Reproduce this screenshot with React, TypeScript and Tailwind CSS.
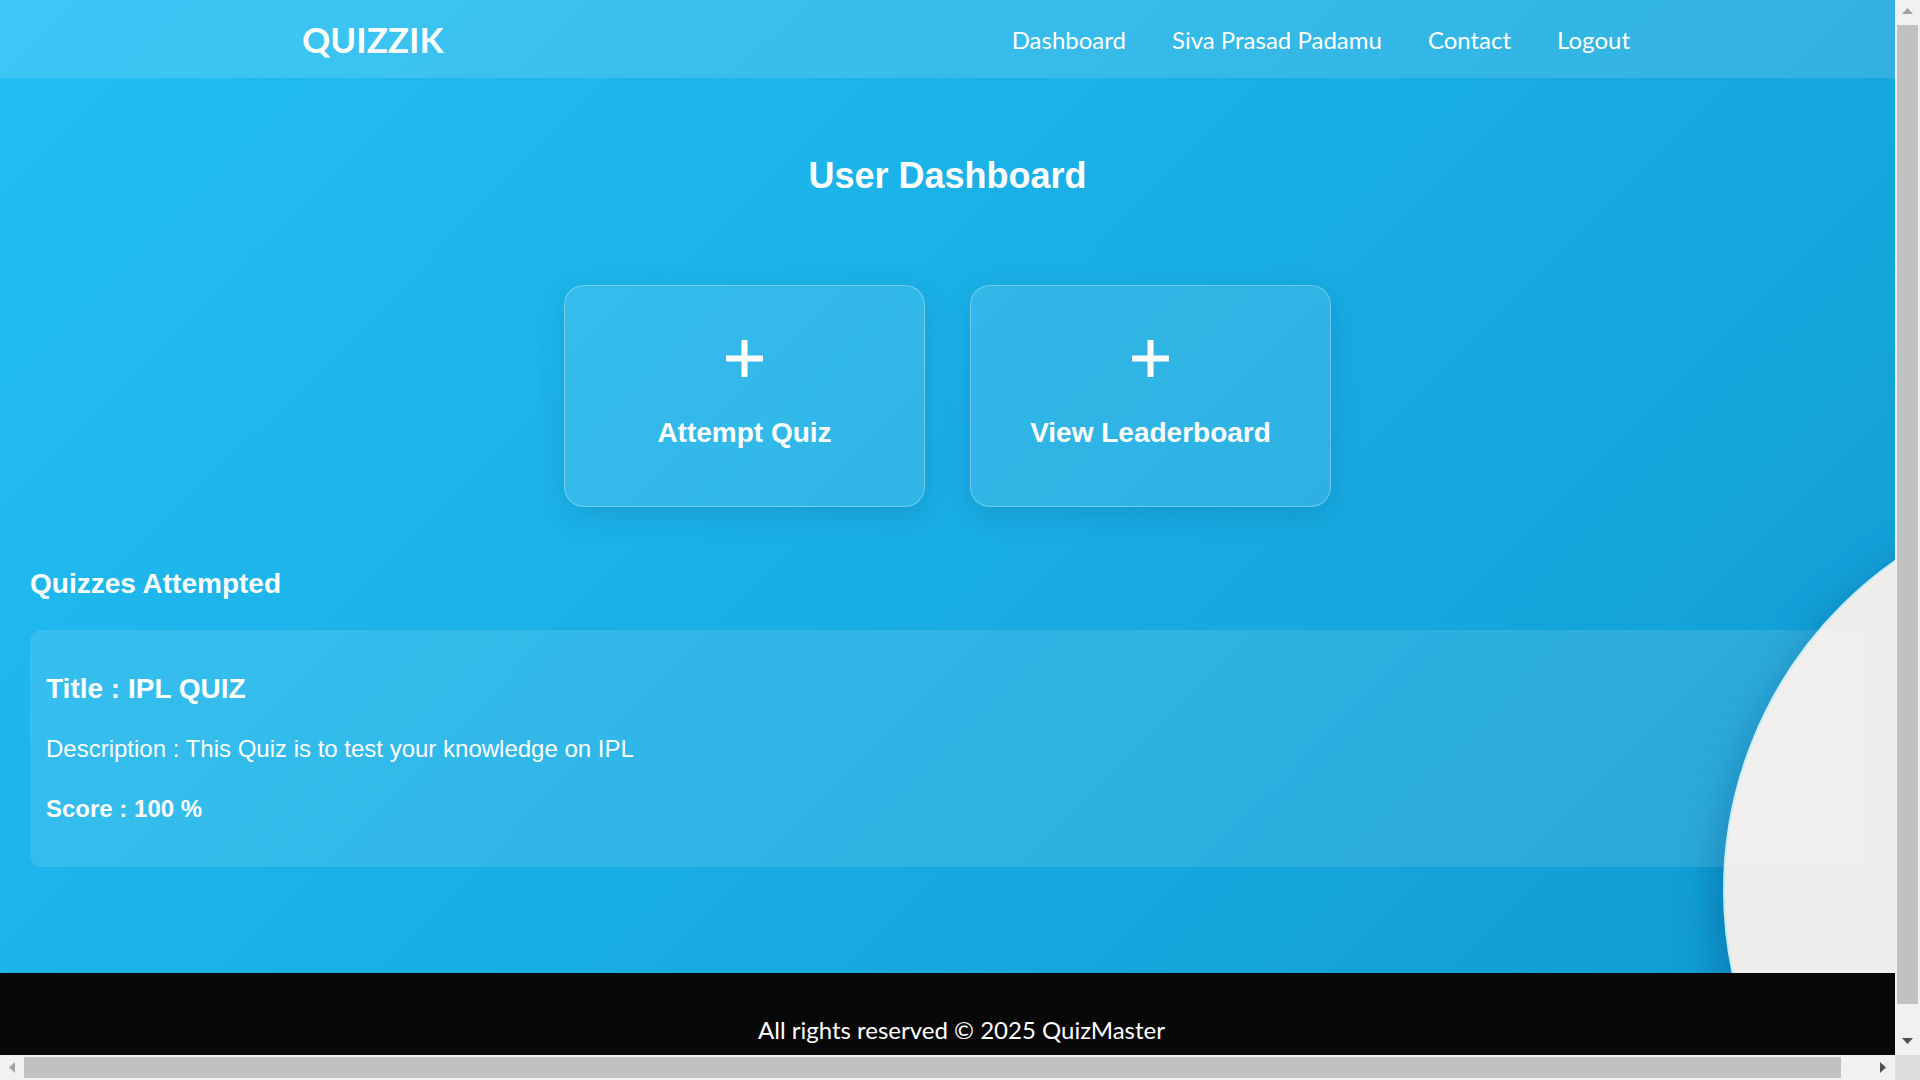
import React from "react";

const navFont = { fontFamily: "Lato, 'Open Sans', sans-serif" };
const bodyFont = { fontFamily: "'Liberation Sans', Arial, sans-serif" };

function PlusIcon() {
  return (
    <svg width="37" height="37" viewBox="0 0 37 37" fill="#fff">
      <rect x="0" y="15.5" width="37" height="6" />
      <rect x="15.5" y="0" width="6" height="37" />
    </svg>
  );
}

function ActionCard({ label }: { label: string }) {
  return (
    <button
      type="button"
      className="flex h-[222px] w-[361px] flex-col items-center rounded-[20px] border border-white/30 bg-white/10 pt-[54px] text-white shadow-[0_8px_28px_rgba(0,70,120,0.18)]"
    >
      <PlusIcon />
      <span className="mt-[40px] text-[28px] font-bold leading-[32px]">{label}</span>
    </button>
  );
}

function Arrow({ dir, dark }: { dir: "up" | "down" | "left" | "right"; dark?: boolean }) {
  const fill = dark ? "#505050" : "#a3a3a3";
  const points = {
    up: "0,6 5.5,0 11,6",
    down: "0,0 11,0 5.5,6",
    left: "6,0 6,11 0,5.5",
    right: "0,0 6,5.5 0,11",
  }[dir];
  const vertical = dir === "up" || dir === "down";
  return (
    <svg width={vertical ? 11 : 6} height={vertical ? 6 : 11} viewBox={vertical ? "0 0 11 6" : "0 0 6 11"}>
      <polygon points={points} fill={fill} />
    </svg>
  );
}

export default function App() {
  return (
    <div className="flex h-screen w-screen flex-col overflow-hidden bg-[#f1f1f1]">
      <div className="flex min-h-0 flex-1">
        <div className="flex min-w-0 flex-1 flex-col overflow-hidden">
          <div className="flex flex-1 flex-col bg-[linear-gradient(135deg,#23c0f5_0%,#19aee4_50%,#0f9cd2_100%)]">
            <nav
              className="flex h-[78px] items-center justify-between bg-white/[0.12] pl-[302px] pr-[265px] text-white"
              style={navFont}
            >
              <span className="text-[35px] font-bold leading-none">QUIZZIK</span>
              <div className="flex items-center gap-[46px] pt-[2px] text-[24px]">
                <a>Dashboard</a>
                <a>Siva Prasad Padamu</a>
                <a>Contact</a>
                <a>Logout</a>
              </div>
            </nav>

            <main className="relative flex-1 overflow-hidden text-white" style={bodyFont}>
              {/* round shape from the backdrop picture */}
              <div className="absolute left-[1723px] top-[409px] h-[806px] w-[806px] rounded-full border-2 border-[#c4ecfb] bg-[#efedec] shadow-[-12px_16px_36px_rgba(0,80,140,0.4)]" />

              <div className="relative flex flex-col pt-[77px]">
                <h1 className="text-center text-[36px] font-bold leading-[41px]">User Dashboard</h1>

                <div className="mt-[89px] flex justify-center gap-[45px]">
                  <ActionCard label="Attempt Quiz" />
                  <ActionCard label="View Leaderboard" />
                </div>

                <h2 className="mt-[61px] px-[30px] text-[28px] font-bold leading-[32px]">Quizzes Attempted</h2>

                <div className="ml-[30px] mr-[32px] mt-[30px] rounded-xl bg-white/10 px-4 pb-[44px] pt-[43px]">
                  <h3 className="text-[28px] font-bold leading-[32px]">Title : IPL QUIZ</h3>
                  <p className="mt-[30px] text-[24px] leading-[28px]">
                    Description : This Quiz is to test your knowledge on IPL
                  </p>
                  <p className="mt-[32px] text-[24px] font-bold leading-[28px]">Score : 100 %</p>
                </div>
              </div>
            </main>
          </div>

          <footer
            className="flex h-[82px] items-end justify-center bg-[#080808] pb-[7px] pl-[28px] text-[24px] text-white"
            style={navFont}
          >
            All rights reserved © 2025 QuizMaster
          </footer>
        </div>

        {/* vertical scrollbar */}
        <div className="flex w-[25px] flex-col bg-[#f1f1f1]">
          <div className="flex h-[25px] items-center justify-center pb-[3px]">
            <Arrow dir="up" />
          </div>
          <div className="mx-[2px] h-[979px] bg-[#c1c1c1]" />
          <div className="flex-1" />
          <div className="flex h-[25px] items-center justify-center pb-[4px]">
            <Arrow dir="down" dark />
          </div>
        </div>
      </div>

      {/* horizontal scrollbar */}
      <div className="flex h-[25px]">
        <div className="flex flex-1 items-center bg-[#f1f1f1]">
          <div className="flex w-[24px] items-center justify-center">
            <Arrow dir="left" />
          </div>
          <div className="h-[21px] w-[1817px] bg-[#c1c1c1]" />
          <div className="flex-1" />
          <div className="flex w-[25px] items-center justify-center">
            <Arrow dir="right" dark />
          </div>
        </div>
        <div className="w-[25px] bg-[#dcdcdc]" />
      </div>
    </div>
  );
}
